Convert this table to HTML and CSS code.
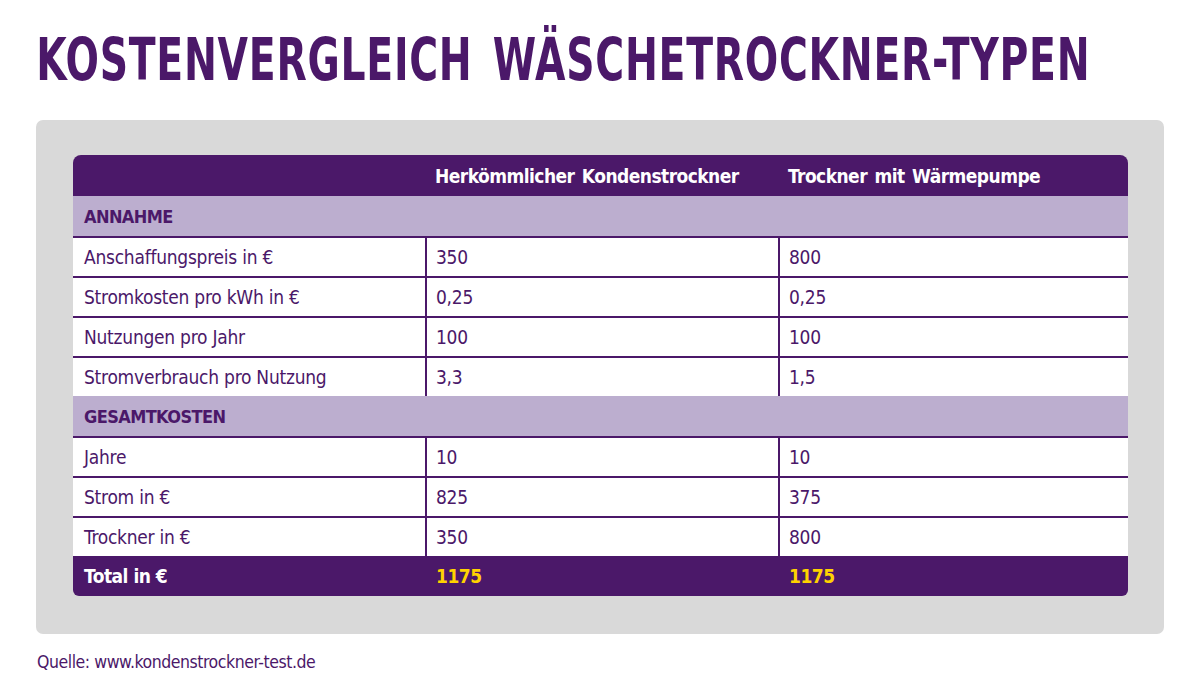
FILE: index.html
```html
<!DOCTYPE html>
<html lang="de">
<head>
<meta charset="utf-8">
<link rel="stylesheet" href="styles.css">
</head>
<body>
<div class="page">
  <h1 class="title"><span class="title-text">KOSTENVERGLEICH WÄSCHETROCKNER-TYPEN</span></h1>
  <div class="panel">
    <div class="tbl">
      <div class="row head"><div class="c"></div><div class="c">Herkömmlicher Kondenstrockner</div><div class="c">Trockner mit Wärmepumpe</div></div>
      <div class="row sec"><div class="c">ANNAHME</div></div>
      <div class="row"><div class="c">Anschaffungspreis in €</div><div class="c">350</div><div class="c">800</div></div>
      <div class="row"><div class="c">Stromkosten pro kWh in €</div><div class="c">0,25</div><div class="c">0,25</div></div>
      <div class="row"><div class="c">Nutzungen pro Jahr</div><div class="c">100</div><div class="c">100</div></div>
      <div class="row"><div class="c">Stromverbrauch pro Nutzung</div><div class="c">3,3</div><div class="c">1,5</div></div>
      <div class="row sec"><div class="c">GESAMTKOSTEN</div></div>
      <div class="row"><div class="c">Jahre</div><div class="c">10</div><div class="c">10</div></div>
      <div class="row"><div class="c">Strom in €</div><div class="c">825</div><div class="c">375</div></div>
      <div class="row"><div class="c">Trockner in €</div><div class="c">350</div><div class="c">800</div></div>
      <div class="row total"><div class="c">Total in €</div><div class="c hl">1175</div><div class="c hl">1175</div></div>
    </div>
  </div>
  <p class="source">Quelle: www.kondenstrockner-test.de</p>
</div>
</body>
</html>
```
FILE: styles.css
```css
* { box-sizing: border-box; }
html, body { margin: 0; padding: 0; background: #fff; }
body {
  font-family: "DejaVu Sans Condensed", "Liberation Sans Narrow", "Liberation Sans", sans-serif;
  color: #4b1869;
}
.page { width: 1200px; height: 692px; padding: 0 36px; overflow: hidden; }
.title {
  margin: 0;
  padding-top: 28px;
  height: 120px;
  font-size: 59px;
  line-height: 64px;
  font-weight: 700;
  color: #4b1869;
  white-space: nowrap;
}
.title-text {
  display: inline-block;
  letter-spacing: 1px;
  word-spacing: 8px;
  transform: scaleX(0.741);
  transform-origin: 1px 0;
}
.panel {
  background: #d9d9d9;
  border-radius: 7px;
  height: 514px;
  padding: 35px 36px 0 37px;
}
.tbl { display: flex; flex-direction: column; }
.row {
  display: grid;
  grid-template-columns: 352px 353px 1fr;
  height: 40px;
  background: #fff;
  border-top: 2px solid #4b1869;
  font-size: 19px;
  letter-spacing: -0.25px;
}
.row .c {
  padding-left: 11px;
  display: flex;
  align-items: center;
  white-space: nowrap;
}
.row .c + .c { border-left: 2px solid #4b1869; padding-left: 9px; }
.row.head {
  background: #4b1869;
  color: #fff;
  font-weight: 700;
  border-top: 0;
  height: 41px;
  border-radius: 8px 8px 0 0;
  letter-spacing: -0.55px;
  word-spacing: 2px;
}
.row.head .c + .c { border-left: 0; padding-left: 10px; }
.row.sec {
  background: #bcaecf;
  grid-template-columns: 1fr;
  font-weight: 700;
  border-top: 0;
  font-size: 18px;
  letter-spacing: -0.6px;
}
.row.sec + .row { border-top: 2px solid #4b1869; }
.row.total {
  background: #4b1869;
  color: #fff;
  font-weight: 700;
  border-top: 0;
  border-radius: 0 0 6px 6px;
  letter-spacing: -0.5px;
}
.row.total .c + .c { border-left: 0; padding-left: 11px; }
.row.total .hl { color: #ffd200; }
.source {
  margin: 0;
  padding-top: 16px;
  font-size: 17.5px;
  line-height: 24px;
  letter-spacing: -0.45px;
  padding-left: 1px;
}
```
